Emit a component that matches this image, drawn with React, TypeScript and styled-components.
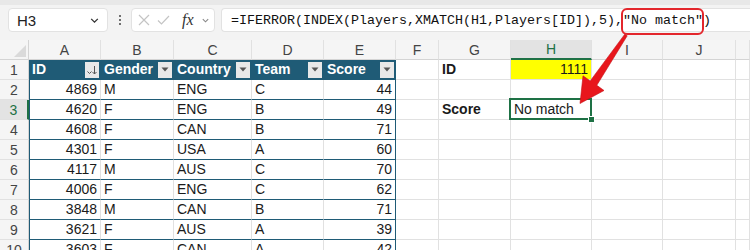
import React from 'react';
import styled, { createGlobalStyle, css } from 'styled-components';

const teal = '#1f5b76';
const gridLine = '#e1e1e1';
const excelGreen = '#1e7145';
const headerBg = '#f5f5f5';

const GlobalStyle = createGlobalStyle`
  html, body {
    margin: 0;
    padding: 0;
    background: #fff;
    overflow: hidden;
  }
  body {
    font-family: 'Liberation Sans', Arial, sans-serif;
    color: #1a1a1a;
  }
`;

const Page = styled.div`
  position: relative;
  width: 750px;
  height: 250px;
  overflow: hidden;
`;

/* ---------- formula bar ---------- */

const Bar = styled.div`
  height: 40px;
  display: flex;
  align-items: center;
  padding-left: 8px;
  background: linear-gradient(#e8e8e8 0 5px, #f3f3f3 5px);
  box-sizing: border-box;
`;

const Box = styled.div`
  height: 24px;
  box-sizing: border-box;
  background: #fff;
  border: 1px solid #e2e2e2;
  border-radius: 4px;
  display: flex;
  align-items: center;
`;

const NameBox = styled(Box)`
  width: 100px;
  padding: 0 7px 0 8px;
  justify-content: space-between;
  font-size: 15px;
  color: #222;
`;

const Dots = styled.div`
  width: 23px;
  display: flex;
  flex-direction: column;
  align-items: center;
  gap: 2px;
  span {
    width: 2px;
    height: 2px;
    border-radius: 1px;
    background: #444;
  }
`;

const FxBox = styled(Box)`
  width: 84px;
  padding: 0 4px 0 6px;
  justify-content: space-between;
`;

const FxLabel = styled.span`
  font-family: 'Liberation Serif', 'Times New Roman', serif;
  font-style: italic;
  font-size: 16px;
  color: #333;
  margin-left: 4px;
`;

const FormulaBox = styled(Box)`
  flex: 1;
  margin-left: 6px;
  border-right: none;
  border-radius: 4px 0 0 4px;
  padding-left: 9px;
  font-family: 'Liberation Mono', 'Courier New', monospace;
  font-size: 13.33px;
  color: #111;
  white-space: pre;
`;

const Callout = styled.span`
  position: relative;
  &::after {
    content: '';
    position: absolute;
    left: -2px;
    right: -1px;
    top: -5px;
    bottom: -7px;
    border: 2px solid #e3262c;
    border-radius: 6px;
  }
`;

/* ---------- sheet grid ---------- */

const Sheet = styled.div`
  display: grid;
  grid-template-columns: 29px 72px 73px 78px 72px 72px 43px 72px 81px 71px 73px 1fr;
  grid-auto-rows: 20px;
  font-size: 14px;
`;

const Corner = styled.div`
  position: relative;
  background: ${headerBg};
  border-right: 1px solid #d4d4d4;
  border-bottom: 1px solid #d4d4d4;
  &::after {
    content: '';
    position: absolute;
    right: 2px;
    bottom: 2px;
    border-style: solid;
    border-width: 0 0 12px 12px;
    border-color: transparent transparent #dadada transparent;
  }
`;

const ColHeader = styled.div<{ $active?: boolean }>`
  display: flex;
  align-items: center;
  justify-content: center;
  background: ${headerBg};
  color: #444;
  border-right: 1px solid ${gridLine};
  border-bottom: 1px solid #d4d4d4;
  ${(p) =>
    p.$active &&
    css`
      background: #e3e3e3;
      color: ${excelGreen};
      border-bottom: 2px solid ${excelGreen};
    `}
`;

const RowHeader = styled.div<{ $active?: boolean }>`
  display: flex;
  align-items: center;
  justify-content: center;
  background: ${headerBg};
  color: #444;
  border-right: 1px solid #d4d4d4;
  border-bottom: 1px solid ${gridLine};
  ${(p) =>
    p.$active &&
    css`
      background: #e3e3e3;
      color: ${excelGreen};
      border-right: 2px solid ${excelGreen};
    `}
`;

type Kind = 'thead' | 'tbody';

const Cell = styled.div<{
  $kind?: Kind;
  $right?: boolean;
  $bold?: boolean;
  $fill?: string;
  $first?: boolean;
  $last?: boolean;
  $selected?: boolean;
}>`
  position: relative;
  display: flex;
  align-items: center;
  justify-content: ${(p) => (p.$right ? 'flex-end' : 'flex-start')};
  padding: 0 3px;
  line-height: 19px;
  white-space: nowrap;
  background: ${(p) => p.$fill ?? '#fff'};
  font-weight: ${(p) => (p.$bold ? 700 : 400)};
  border-right: 1px solid ${gridLine};
  border-bottom: 1px solid ${gridLine};
  ${(p) =>
    p.$kind === 'thead' &&
    css`
      background: ${teal};
      color: #fff;
      font-weight: 700;
      justify-content: space-between;
      padding-right: 0;
      border-right-color: ${teal};
      border-bottom-color: ${teal};
    `}
  ${(p) =>
    p.$kind === 'tbody' &&
    css`
      border-bottom-color: ${teal};
    `}
  ${(p) =>
    p.$last &&
    css`
      border-right-color: ${teal};
    `}
  ${(p) =>
    p.$first &&
    css`
      box-shadow: inset 1px 0 ${teal};
    `}
  ${(p) =>
    p.$selected &&
    css`
      &::before {
        content: '';
        position: absolute;
        left: -2px;
        top: -2px;
        right: -1px;
        bottom: -1px;
        border: 2px solid ${excelGreen};
      }
      &::after {
        content: '';
        position: absolute;
        right: -4px;
        bottom: -4px;
        width: 5px;
        height: 5px;
        background: ${excelGreen};
        border: 1px solid #fff;
        z-index: 1;
      }
    `}
`;

const FilterButton = styled.span`
  width: 14px;
  height: 16px;
  margin-right: 1px;
  background: #e8e8e8;
  display: flex;
  align-items: center;
  justify-content: center;
`;

const Overlay = styled.svg`
  position: absolute;
  left: 0;
  top: 0;
  pointer-events: none;
`;

const Chevron = ({ size = 10, color = '#333' }: { size?: number; color?: string }) => (
  <svg width={size} height={size} viewBox="0 0 10 10">
    <path d="M2 3.5 L5 6.5 L8 3.5" fill="none" stroke={color} strokeWidth="1.2" />
  </svg>
);

const Caret = () => (
  <svg width="8" height="5" viewBox="0 0 8 5">
    <path d="M0.5 0.5 H7.5 L4 4.5 Z" fill="#555" />
  </svg>
);

const SortIcon = () => (
  <svg width="12" height="12" viewBox="0 0 12 12">
    <path d="M1.5 7.5 L3.5 9.5 L5.5 7.5" fill="none" stroke="#555" strokeWidth="1" />
    <path d="M8.5 2 V10 M6.5 8 L8.5 10 L10.5 8" fill="none" stroke="#555" strokeWidth="1" />
  </svg>
);

type Row = [number, string, string, string, number];

const players: Row[] = [
  [4869, 'M', 'ENG', 'C', 44],
  [4620, 'F', 'ENG', 'B', 49],
  [4608, 'F', 'CAN', 'B', 71],
  [4301, 'F', 'USA', 'A', 60],
  [4117, 'M', 'AUS', 'C', 70],
  [4006, 'F', 'ENG', 'C', 62],
  [3848, 'M', 'CAN', 'B', 71],
  [3621, 'F', 'AUS', 'A', 39],
  [3603, 'F', 'CAN', 'A', 42],
];

const letters = ['A', 'B', 'C', 'D', 'E', 'F', 'G', 'H', 'I', 'J', ''];
const tableHeads = ['ID', 'Gender', 'Country', 'Team', 'Score'];

export default function App() {
  const lookupRow = (r: number) => {
    // G, H columns
    if (r === 1)
      return [
        <Cell key="g" $bold>ID</Cell>,
        <Cell key="h" $right $fill="#ffff00">1111</Cell>,
      ];
    if (r === 3)
      return [
        <Cell key="g" $bold>Score</Cell>,
        <Cell key="h" $selected>No match</Cell>,
      ];
    return [<Cell key="g" />, <Cell key="h" />];
  };

  return (
    <Page>
      <GlobalStyle />
      <Bar>
        <NameBox>
          <span>H3</span>
          <Chevron size={11} />
        </NameBox>
        <Dots>
          <span />
          <span />
          <span />
        </Dots>
        <FxBox>
          <svg width="12" height="12" viewBox="0 0 12 12">
            <path d="M1 1 L11 11 M11 1 L1 11" stroke="#c4c4c4" strokeWidth="1.2" />
          </svg>
          <svg width="13" height="12" viewBox="0 0 13 12">
            <path d="M1 6.5 L4.5 10 L12 2" fill="none" stroke="#c4c4c4" strokeWidth="1.2" />
          </svg>
          <FxLabel>fx</FxLabel>
          <Chevron size={9} color="#888" />
        </FxBox>
        <FormulaBox>
          =IFERROR(INDEX(Players,XMATCH(H1,Players[ID]),5),<Callout>"No match"</Callout>)
        </FormulaBox>
      </Bar>

      <Sheet>
        <Corner />
        {letters.map((l, i) => (
          <ColHeader key={i} $active={l === 'H'}>
            {l}
          </ColHeader>
        ))}

        <RowHeader>1</RowHeader>
        {tableHeads.map((h, i) => (
          <Cell key={h} $kind="thead">
            <span>{h}</span>
            <FilterButton>{i === 0 ? <SortIcon /> : <Caret />}</FilterButton>
          </Cell>
        ))}
        <Cell />
        {lookupRow(1)}
        <Cell />
        <Cell />
        <Cell />

        {players.map((p, idx) => {
          const r = idx + 2;
          return (
            <React.Fragment key={r}>
              <RowHeader $active={r === 3}>{r}</RowHeader>
              <Cell $kind="tbody" $right $first>{p[0]}</Cell>
              <Cell $kind="tbody">{p[1]}</Cell>
              <Cell $kind="tbody">{p[2]}</Cell>
              <Cell $kind="tbody">{p[3]}</Cell>
              <Cell $kind="tbody" $right $last>{p[4]}</Cell>
              <Cell />
              {lookupRow(r)}
              <Cell />
              <Cell />
              <Cell />
            </React.Fragment>
          );
        })}
      </Sheet>

      <Overlay width="750" height="250" viewBox="0 0 750 250">
        <polygon
          points="627.2,35.8 596.8,85.3 604,90.5 580,103.5 583,75.8 590.2,80.9 624.8,34.2"
          fill="#e8161c"
          stroke="#c40f14"
          strokeWidth="0.6"
          strokeLinejoin="round"
        />
      </Overlay>
    </Page>
  );
}
